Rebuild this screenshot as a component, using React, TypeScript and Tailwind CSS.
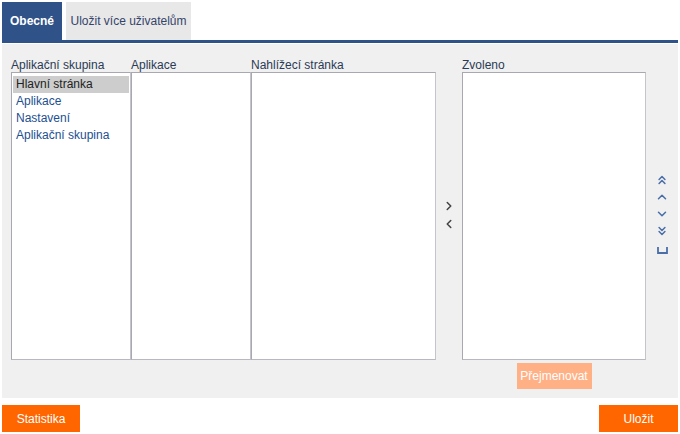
import { ChevronsUp, ChevronUp, ChevronDown, ChevronsDown, ChevronRight, ChevronLeft } from "lucide-react";

const groups = ["Hlavní stránka", "Aplikace", "Nastavení", "Aplikační skupina"];

function ListBox({ label, width, items }: { label: string; width: string; items?: string[] }) {
  return (
    <div className={`flex flex-col ${width}`}>
      <div className="h-[14px] text-[12px] leading-[14px] text-[#2b3a55] whitespace-nowrap">{label}</div>
      <div className="h-[288px] bg-white border border-[#a8a8b0] border-r-[#c4c4ca] border-b-[#b8b8c0] pt-[3px] px-[1px]">
        {items?.map((it, i) => (
          <div
            key={it}
            className={`h-[17px] px-[3px] text-[12px] leading-[17px] whitespace-nowrap ${
              i === 0 ? "bg-[#cdcdcd] text-[#222]" : "text-[#1d4f91]"
            }`}
          >
            {it}
          </div>
        ))}
      </div>
    </div>
  );
}

export default function App() {
  return (
    <div
      className="w-[680px] h-[434px] bg-white flex flex-col"
      style={{ fontFamily: "'Liberation Sans', Arial, sans-serif" }}
    >
      {/* tabs */}
      <div className="flex gap-[4px] pt-[2px] pl-[2px] h-[40px]">
        <div className="w-[60px] bg-[#2f5288] text-white font-bold text-[12px] flex items-center justify-center">
          Obecné
        </div>
        <div className="w-[125px] bg-[#e8e8e8] text-[#34446a] text-[12px] whitespace-nowrap flex items-center justify-center">
          Uložit více uživatelům
        </div>
      </div>
      <div className="mx-[2px] h-[3px] bg-[#2f5288]" />

      {/* panel */}
      <div className="mx-[2px] mt-[1px] h-[354px] bg-[#f0f0f0] pl-[9px] pt-[14px] flex">
        <ListBox label="Aplikační skupina" width="w-[120px]" items={groups} />
        <ListBox label="Aplikace" width="w-[120px]" />
        <ListBox label="Nahlížecí stránka" width="w-[185px]" />

        <div className="w-[26px] flex flex-col items-center pt-[141px] text-[#444]">
          <ChevronRight size={14} strokeWidth={2.6} className="mb-[4px]" />
          <ChevronLeft size={14} strokeWidth={2.6} />
        </div>

        <div className="flex flex-col w-[184px]">
          <ListBox label="Zvoleno" width="w-[184px]" />
          <div className="flex justify-center mt-[3px]">
            <button className="w-[75px] h-[26px] bg-[#ffb085] text-white text-[12px]">Přejmenovat</button>
          </div>
        </div>

        <div className="flex-1 flex flex-col items-center pt-[115px] text-[#4a6fa8]">
          <ChevronsUp size={14} strokeWidth={2.6} className="mb-[3px]" />
          <ChevronUp size={14} strokeWidth={2.6} className="mb-[3px]" />
          <ChevronDown size={14} strokeWidth={2.6} className="mb-[3px]" />
          <ChevronsDown size={14} strokeWidth={2.6} className="mb-[8px]" />
          <svg width="11" height="8" viewBox="0 0 11 8" fill="none" stroke="currentColor" strokeWidth="1.8">
            <path d="M1 1v6h9V1" />
          </svg>
        </div>
      </div>

      {/* bottom buttons */}
      <div className="flex justify-between mx-[2px] mt-[7px]">
        <button className="w-[78px] h-[27px] bg-[#ff6600] text-white text-[12px]">Statistika</button>
        <button className="w-[79px] h-[27px] bg-[#ff6600] text-white text-[12px]">Uložit</button>
      </div>
    </div>
  );
}
